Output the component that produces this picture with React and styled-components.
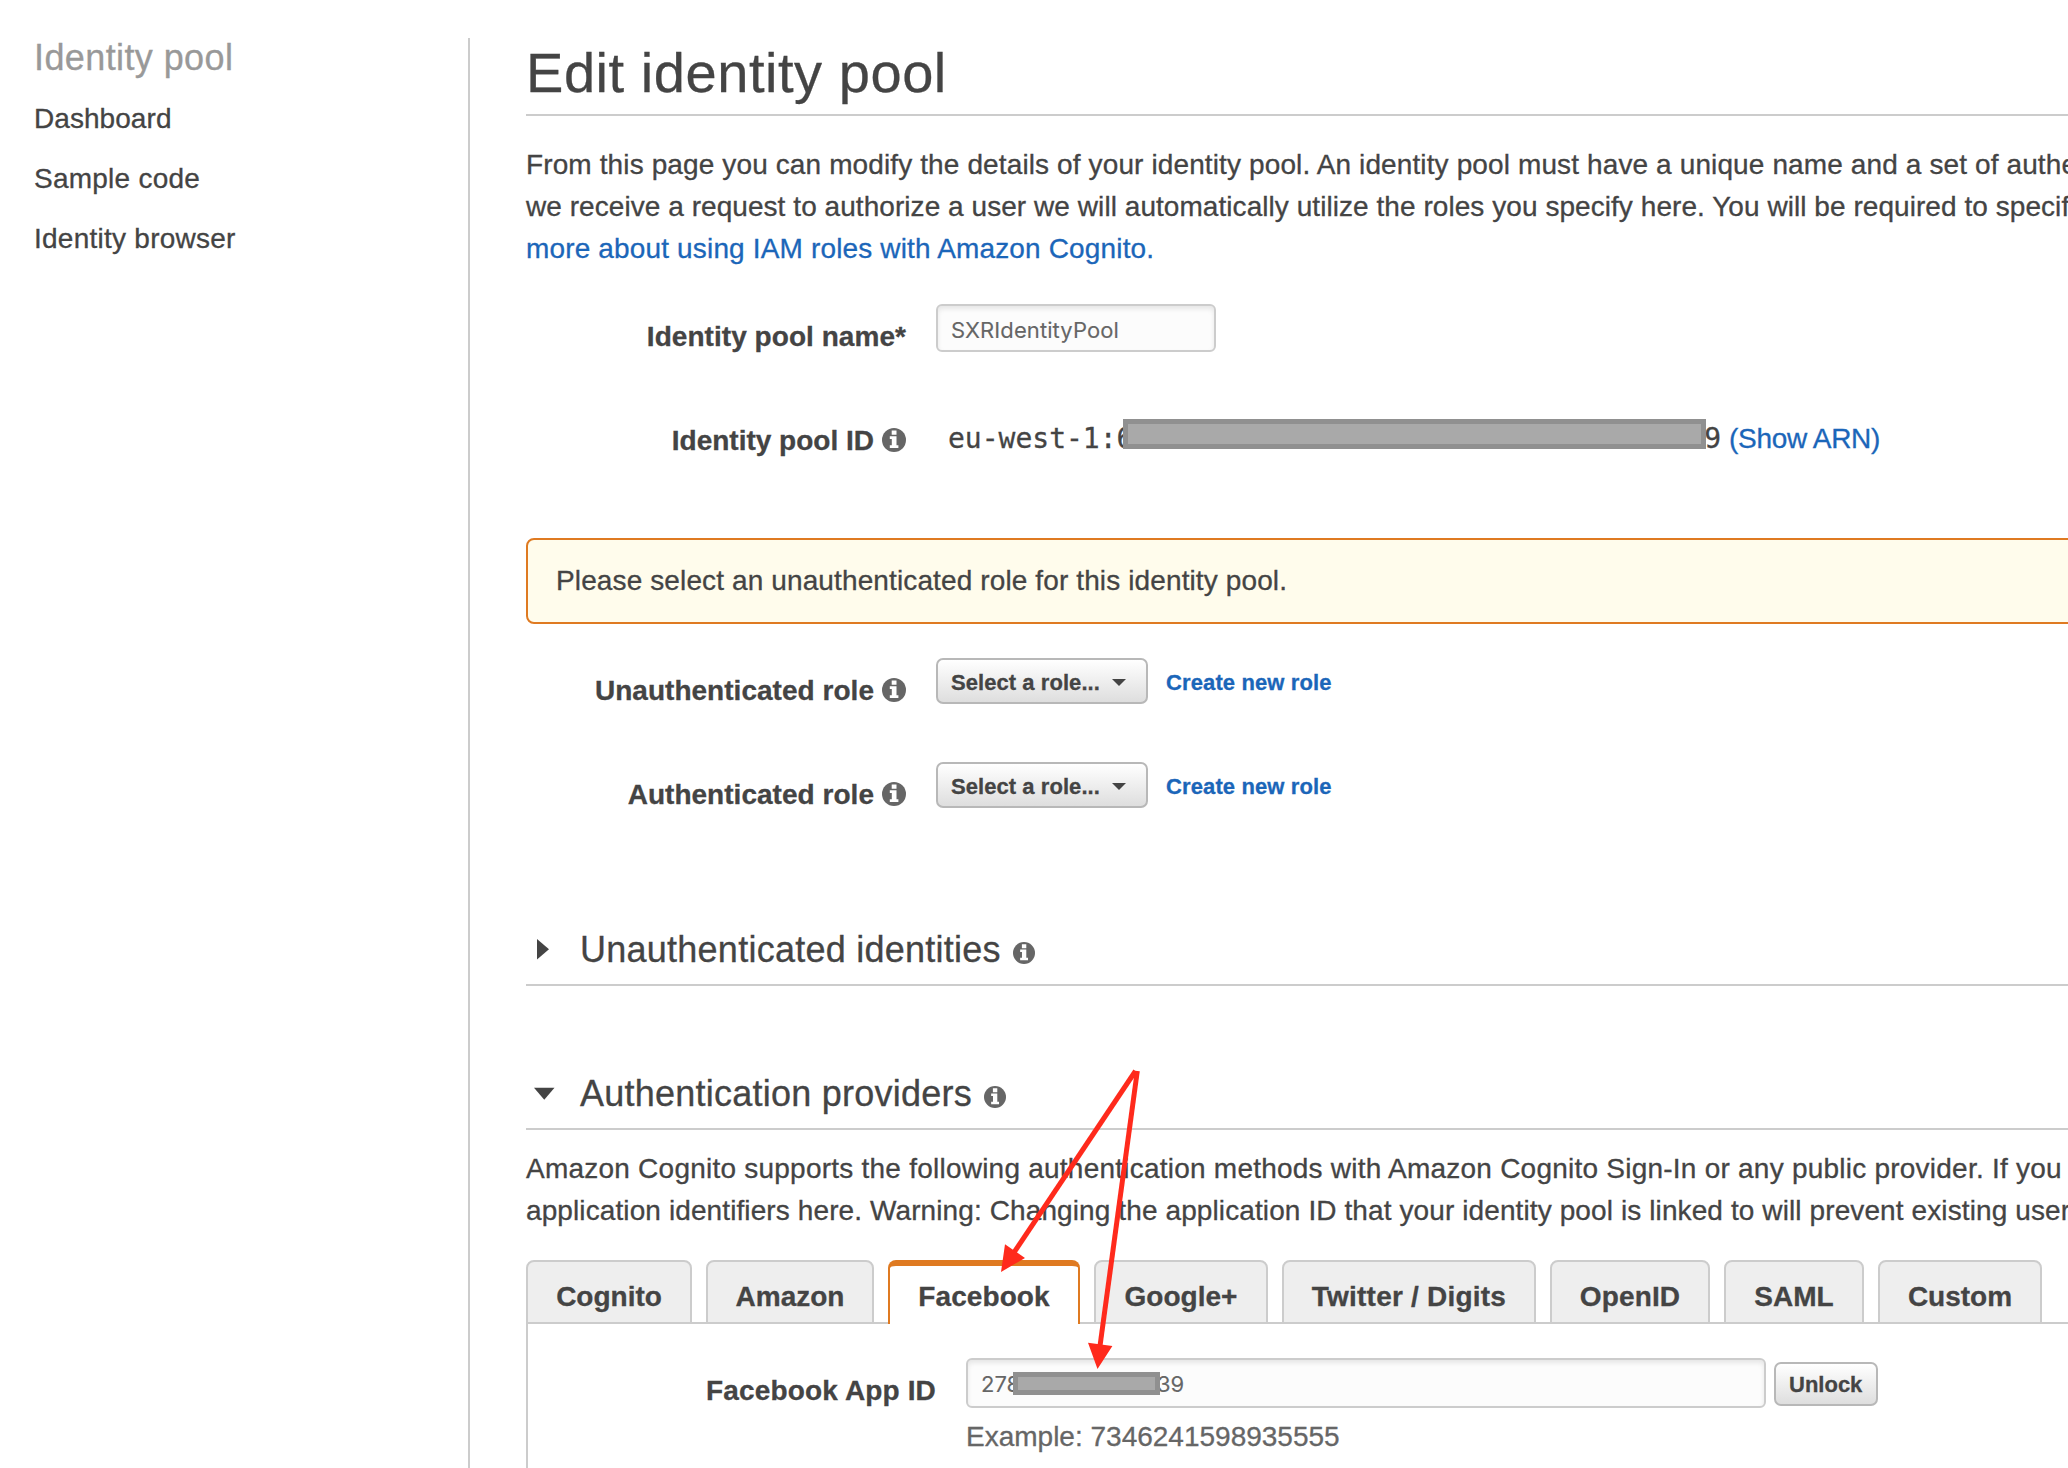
import React from "react";
import styled, { createGlobalStyle, css } from "styled-components";

const sans = `"Liberation Sans", Arial, Helvetica, sans-serif`;
const field = `Inter, "Liberation Sans", sans-serif`;
const mono = `"DejaVu Sans Mono", "Liberation Mono", monospace`;
const ink = "#444";
const blue = "#1b66b9";
const line = "#ccc";
const orange = "#df7a21";

const Global = createGlobalStyle`
  *, *::before, *::after { box-sizing: border-box; }
  html, body { margin: 0; background: #fff; }
  body {
    overflow: hidden;
    font-family: ${sans};
    font-size: 28px;
    line-height: 42px;
    color: ${ink};
    -webkit-text-stroke-width: 0.3px;
  }
  a { color: ${blue}; text-decoration: none; }
  h1, h2, p { margin: 0; font-weight: 400; }
`;

const spacing = css`
  letter-spacing: ${(p) => p.$ls || 0}px;
`;

const Page = styled.div`
  position: relative;
  display: flex;
  width: 2068px;
  height: 1468px;
  padding-top: 38px;
  overflow: hidden;
`;

const Sidebar = styled.nav`
  flex: none;
  display: flex;
  flex-direction: column;
  width: 470px;
  padding-left: 34px;
  border-right: 2px solid ${line};
`;

const SidebarTitle = styled.div`
  height: 51px;
  line-height: 40px;
  font-size: 36px;
  color: #999;
  letter-spacing: 0.4px;
`;

const SidebarItem = styled.a`
  && { color: ${ink}; }
  height: 60px;
  line-height: 60px;
  ${spacing}
`;

const Main = styled.main`
  flex: 1;
  min-width: 0;
  padding-left: 56px;
  overflow: hidden;
`;

const Title = styled.h1`
  height: 78px;
  line-height: 69px;
  font-size: 56px;
  letter-spacing: 0.55px;
  border-bottom: 2px solid ${line};
`;

const Para = styled.p`
  margin-top: ${(p) => p.$top}px;
  height: ${(p) => p.$height}px;
`;

const Line = styled.span`
  display: block;
  white-space: nowrap;
  ${spacing}
`;

const Row = styled.div`
  display: flex;
  align-items: flex-start;
  height: ${(p) => p.$height}px;
`;

const Spacer = styled.div`
  height: ${(p) => p.$height}px;
`;

const Text = styled.span`
  ${spacing}
`;

const Label = styled.div`
  flex: none;
  display: flex;
  justify-content: flex-end;
  align-items: center;
  width: ${(p) => p.$width || 380}px;
  margin-top: ${(p) => p.$top}px;
  margin-right: 30px;
  line-height: 32px;
  font-weight: 700;
  white-space: nowrap;

  ${Text} {
    padding-top: 1px;
    margin-bottom: -1px;
  }
`;

const Info = styled.svg`
  flex: none;
  display: block;
  width: ${(p) => p.$size}px;
  height: ${(p) => p.$size}px;
  margin-left: ${(p) => p.$left}px;
  margin-top: ${(p) => p.$top || 0}px;
`;

const Field = styled.div`
  position: relative;
  flex: none;
  display: flex;
  width: ${(p) => p.$width}px;
  height: ${(p) => p.$height}px;
  padding-left: 13px;
  border: 2px solid ${line};
  border-radius: 6px;
  background: #fcfcfc;
  box-shadow: inset 0 3px 5px rgba(0, 0, 0, 0.09);
  color: #666;
  font: 400 22px/48px ${field};
  -webkit-text-stroke-width: 0.1px;
`;

const FieldStart = styled.span`
  width: 176px;
`;

const PoolId = styled.div`
  position: relative;
  flex: none;
  display: flex;
  justify-content: space-between;
  width: 793px;
  padding: 1px 8px 0 12px;
  font-family: ${mono};
`;

const Redaction = styled.span`
  position: absolute;
  left: ${(p) => p.$left}px;
  top: ${(p) => p.$top}px;
  width: ${(p) => p.$width}px;
  height: ${(p) => p.$height}px;
  border: 5px solid #909090;
  background: #a9a9a9;
`;

const Arn = styled.a`
  padding-top: 1px;
  letter-spacing: -0.3px;
`;

const Alert = styled.div`
  height: 86px;
  margin-right: -20px;
  padding: 20px 28px;
  border: 2px solid ${orange};
  border-radius: 8px;
  background: #fffcec;
`;

const Button = styled.button`
  flex: none;
  display: flex;
  align-items: center;
  width: ${(p) => p.$width}px;
  height: ${(p) => p.$height}px;
  padding: 1px 0 0 13px;
  border: 2px solid #b8b8b8;
  border-radius: 7px;
  background: linear-gradient(#fff, #dedede);
  color: ${ink};
  font: 700 22px/26px ${sans};
  white-space: nowrap;
`;

const RoleButton = styled(Button)`
  padding-top: 3px;
  letter-spacing: 0.06px;
`;

const UnlockButton = styled(Button)`
  margin: 4px 0 0 8px;
`;

const Caret = styled.span`
  margin-left: 12px;
  border: 7px solid transparent;
  border-top: 7px solid ${ink};
  border-bottom: 0;
`;

const RoleLink = styled.a`
  margin-left: 18px;
  line-height: 49px;
  font-size: 22px;
  font-weight: 700;
  letter-spacing: 0.12px;
`;

const Section = styled.h2`
  display: flex;
  align-items: center;
  height: 58px;
  padding-bottom: 12px;
  border-bottom: 2px solid ${line};
  font-size: 36px;
  white-space: nowrap;
`;

const Toggle = styled.svg`
  flex: none;
  width: 42px;
  height: 24px;
  margin: 0 6px;
`;

const Tabs = styled.div`
  display: flex;
  gap: 14px;
  height: 64px;
  box-shadow: inset 0 -2px 0 ${line};
`;

const Tab = styled.div`
  flex: none;
  width: ${(p) => p.$width}px;
  padding-top: 14px;
  border: 2px solid ${line};
  border-radius: 8px 8px 0 0;
  background: #eee;
  text-align: center;
  font-weight: 700;
  white-space: nowrap;
  ${spacing}
  ${(p) =>
    p.$active &&
    css`
      padding-top: 10px;
      border-color: ${orange};
      border-top-width: 6px;
      border-bottom: 0;
      background: #fff;
    `}
`;

const Panel = styled.div`
  height: 146px;
  padding-top: 34px;
  border-left: 2px solid ${line};
`;

const Hint = styled.div`
  margin-left: 438px;
  margin-top: 8px;
  color: #666;
`;

const Arrows = styled.svg`
  position: absolute;
  left: 980px;
  top: 1050px;
  width: 180px;
  height: 330px;
`;

function InfoIcon({ size = 24, left = 8, top = 0 }) {
  return (
    <Info $size={size} $left={left} $top={top} viewBox="0 0 24 24">
      <circle cx="12" cy="12" r="12" fill="#666" />
      <path fill="#fff" d="M9.700 2.500h4.800v4.200H9.700zM7.800 8.200h6.700v9h1.900V20H7.800v-2.800h2v-6.200h-2z" />
    </Info>
  );
}

function RoleRow({ label, height }) {
  return (
    <Row $height={height}>
      <Label $top={16}>
        <Text $ls={0.03}>{label}</Text>
        <InfoIcon />
      </Label>
      <RoleButton $width={212} $height={46}>
        Select a role...
        <Caret />
      </RoleButton>
      <RoleLink>Create new role</RoleLink>
    </Row>
  );
}

const tabs = [
  { name: "Cognito", width: 166 },
  { name: "Amazon", width: 168 },
  { name: "Facebook", width: 192, active: true, ls: 0.08 },
  { name: "Google+", width: 174 },
  { name: "Twitter / Digits", width: 254, ls: 0.22 },
  { name: "OpenID", width: 160, ls: 0.15 },
  { name: "SAML", width: 140 },
  { name: "Custom", width: 164 },
];

export default function App() {
  return (
    <>
      <Global />
      <Page>
        <Sidebar>
          <SidebarTitle>Identity pool</SidebarTitle>
          <SidebarItem $ls={0.06}>Dashboard</SidebarItem>
          <SidebarItem $ls={0.24}>Sample code</SidebarItem>
          <SidebarItem $ls={0.25}>Identity browser</SidebarItem>
        </Sidebar>
        <Main>
          <Title>Edit identity pool</Title>
          <Para $top={28} $height={160}>
            <Line $ls={0.12}>
              From this page you can modify the details of your identity pool. An identity pool must have a unique name and a set of authe
            </Line>
            <Line $ls={0.055}>
              we receive a request to authorize a user we will automatically utilize the roles you specify here. You will be required to specif
            </Line>
            <Line $ls={0.155}>
              <a>more about using IAM roles with Amazon Cognito.</a>
            </Line>
          </Para>
          <Row $height={113}>
            <Label $top={16}>
              <Text $ls={0.05}>Identity pool name*</Text>
            </Label>
            <Field $width={280} $height={48}>
              <Text $ls={0.09}>SXRIdentityPool</Text>
            </Field>
          </Row>
          <Row $height={121}>
            <Label $top={7}>
              <Text>Identity pool ID</Text>
              <InfoIcon />
            </Label>
            <PoolId>
              <span>eu-west-1:6</span>
              <span>9</span>
              <Redaction $left={187} $top={2} $width={583} $height={30} />
            </PoolId>
            <Arn>(Show ARN)</Arn>
          </Row>
          <Alert>
            <Line $ls={0.12}>Please select an unauthenticated role for this identity pool.</Line>
          </Alert>
          <Spacer $height={34} />
          <RoleRow label="Unauthenticated role" height={104} />
          <RoleRow label="Authenticated role" height={166} />
          <Section>
            <Toggle viewBox="0 0 42 24">
              <path d="M5 1v20.500l12-10.250z" fill={ink} />
            </Toggle>
            <Text $ls={0.25}>Unauthenticated identities</Text>
            <InfoIcon size={22} left={12} top={5} />
          </Section>
          <Spacer $height={86} />
          <Section>
            <Toggle viewBox="0 0 42 24">
              <path d="M2 5.800h20.500l-10.250 12z" fill={ink} />
            </Toggle>
            <Text $ls={0.24}>Authentication providers</Text>
            <InfoIcon size={22} left={12} top={5} />
          </Section>
          <Para $top={18} $height={112}>
            <Line $ls={0.232}>
              Amazon Cognito supports the following authentication methods with Amazon Cognito Sign-In or any public provider. If you a
            </Line>
            <Line $ls={0.105}>
              application identifiers here. Warning: Changing the application ID that your identity pool is linked to will prevent existing user
            </Line>
          </Para>
          <Tabs>
            {tabs.map((t) => (
              <Tab key={t.name} $width={t.width} $active={t.active} $ls={t.ls}>
                {t.name}
              </Tab>
            ))}
          </Tabs>
          <Panel>
            <Row $height={50}>
              <Label $width={408} $top={16}>
                <Text $ls={0.15}>Facebook App ID</Text>
              </Label>
              <Field $width={800} $height={50}>
                <FieldStart>278</FieldStart>
                <span>39</span>
                <Redaction $left={45} $top={12} $width={147} $height={23} />
              </Field>
              <UnlockButton $width={104} $height={44}>
                Unlock
              </UnlockButton>
            </Row>
            <Hint>Example: 7346241598935555</Hint>
          </Panel>
        </Main>
        <Arrows viewBox="980 1050 180 330">
          <g fill="none" stroke="#ff2a1c" strokeWidth="5">
            <path d="M1135.500 1071L1013 1254" />
            <path d="M1137.300 1071L1100 1346" />
          </g>
          <path d="M1001 1272L1005 1244.300L1025 1258zM1097.500 1369L1088 1342.700L1112.400 1346z" fill="#ff2a1c" />
        </Arrows>
      </Page>
    </>
  );
}
